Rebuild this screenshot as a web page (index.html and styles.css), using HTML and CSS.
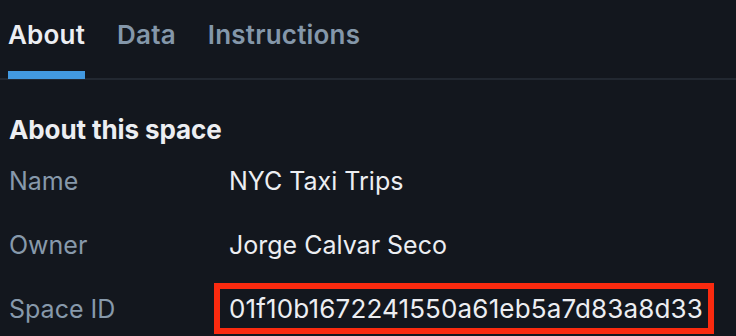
FILE: index.html
```html
<!DOCTYPE html>
<html>
	<head>
		<meta charset="UTF-8">
		<title>About this space</title>
		<link rel="stylesheet" href="styles.css">
	</head>
	<body>
		<div id="panel">
			<ul class="tabs">
				<li class="tab active">About</li>
				<li class="tab">Data</li>
				<li class="tab">Instructions</li>
			</ul>

			<div class="about">
				<h2>About this space</h2>
				<dl class="info">
					<dt>Name</dt>
					<dd>NYC Taxi Trips</dd>
					<dt>Owner</dt>
					<dd>Jorge Calvar Seco</dd>
					<dt>Space ID</dt>
					<dd><span class="mark">01f10b1672241550a61eb5a7d83a8d33</span></dd>
				</dl>
			</div>
		</div>
	</body>
</html>
```

FILE: styles.css
```css
*{margin: 0;padding: 0;box-sizing: border-box;}
ul,li{list-style: none;}
html,body{background: #13171e;}
body{font-family: Inter, "Liberation Sans", sans-serif;color: #e9ecf0;overflow: hidden;}
#panel{width: 736px;height: 336px;}
.tabs{display: flex;gap: 32px;padding: 0 0 0 8px;border-bottom: 2px solid #222831;}
.tab{font-size: 26px;font-weight: 600;letter-spacing: 0.2px;color: #8497aa;padding: 19px 0 0;height: 79px;line-height: normal;border-bottom: 8px solid transparent;margin-bottom: -1px;}
.tab.active{color: #eceef2;border-bottom-color: #4299e0;}
.about{padding: 35px 0 0 9px;}
.about h2{font-size: 26px;font-weight: 700;color: #eceef2;line-height: 30px;letter-spacing: -0.1px;}
.info{display: grid;grid-template-columns: 220px auto;margin-top: 4px;font-size: 25px;line-height: 64px;}
.info dt{color: #8799ab;}
.info dd{color: #eceef2;}
.mark{display: inline-block;border: 6px solid #fa2a0f;padding: 0 5px 0 9px;margin-left: -15px;font-size: 26px;line-height: 39px;letter-spacing: 0.15px;}
```
